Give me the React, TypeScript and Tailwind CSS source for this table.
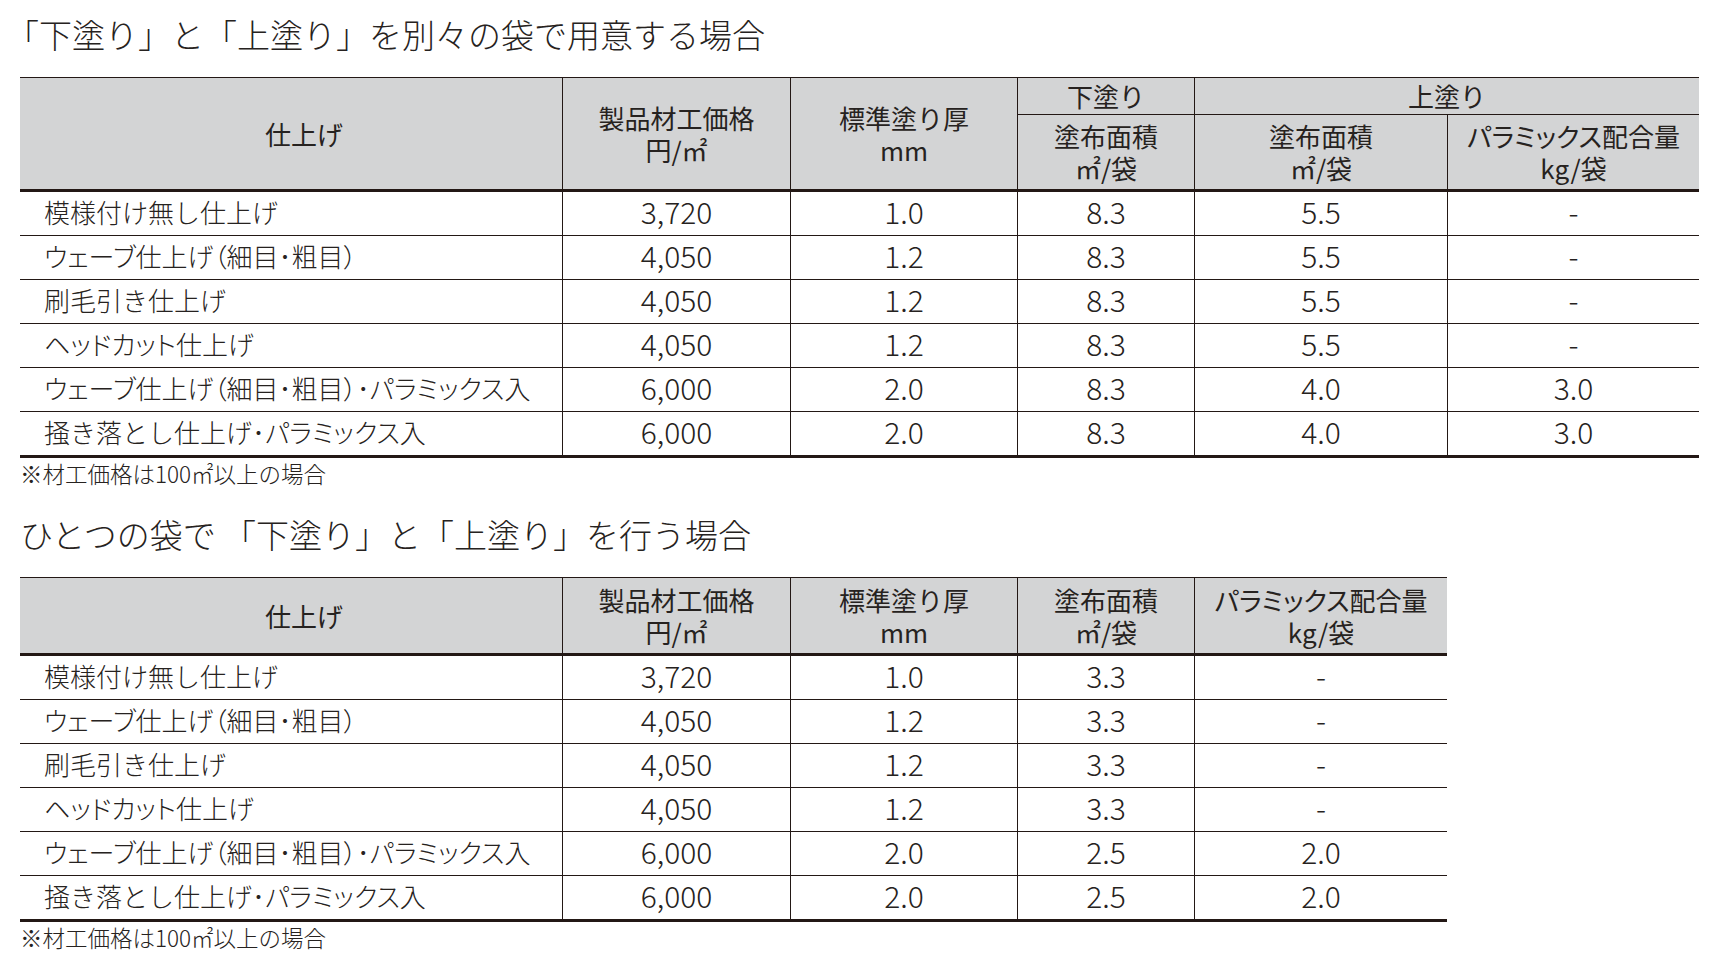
// Price tables for 下塗り / 上塗り products
import type { ReactNode } from "react";

const LINE = "border-[#231815]";

type Row = string[];

const separateRows: Row[] = [
  ["模様付け無し仕上げ", "3,720", "1.0", "8.3", "5.5", "-"],
  ["ウェーブ仕上げ（細目･粗目）", "4,050", "1.2", "8.3", "5.5", "-"],
  ["刷毛引き仕上げ", "4,050", "1.2", "8.3", "5.5", "-"],
  ["ヘッドカット仕上げ", "4,050", "1.2", "8.3", "5.5", "-"],
  ["ウェーブ仕上げ（細目･粗目）･パラミックス入", "6,000", "2.0", "8.3", "4.0", "3.0"],
  ["掻き落とし仕上げ･パラミックス入", "6,000", "2.0", "8.3", "4.0", "3.0"],
];

const singleRows: Row[] = [
  ["模様付け無し仕上げ", "3,720", "1.0", "3.3", "-"],
  ["ウェーブ仕上げ（細目･粗目）", "4,050", "1.2", "3.3", "-"],
  ["刷毛引き仕上げ", "4,050", "1.2", "3.3", "-"],
  ["ヘッドカット仕上げ", "4,050", "1.2", "3.3", "-"],
  ["ウェーブ仕上げ（細目･粗目）･パラミックス入", "6,000", "2.0", "2.5", "2.0"],
  ["掻き落とし仕上げ･パラミックス入", "6,000", "2.0", "2.5", "2.0"],
];

// katakana runs and brackets are set proportionally, like the printed table
function Kana({ text }: { text: string }) {
  const parts = text.split(/([\u30A0-\u30FF（）]+)/);
  return (
    <>
      {parts.map((p, i) =>
        /^[\u30A0-\u30FF（）]+$/.test(p) ? (
          <span key={i} className="[font-feature-settings:'palt']">{p}</span>
        ) : (
          p
        )
      )}
    </>
  );
}

const th = `bg-[#d3d4d5] font-normal text-[26px] leading-[32px] text-center align-middle p-0 ${LINE}`;

function Head({ top, bottom }: { top: string; bottom?: ReactNode }) {
  return (
    <>
      <Kana text={top} />
      {bottom && (
        <>
          <br />
          {bottom}
        </>
      )}
    </>
  );
}

function Body({ rows }: { rows: Row[] }) {
  return (
    <tbody>
      {rows.map((r, i) => {
        const last = i === rows.length - 1;
        const bb = last ? "border-b-[3px]" : "border-b";
        return (
          <tr key={i} className={last ? "h-[46px]" : "h-[44px]"}>
            {r.map((c, j) =>
              j === 0 ? (
                <td key={j} className={`${bb} ${LINE} pl-[24px] pb-[3px] text-[26px] leading-none text-left whitespace-nowrap`}>
                  <Kana text={c} />
                </td>
              ) : (
                <td key={j} className={`${bb} border-l ${LINE} pb-[5px] text-[30px] leading-none text-center`}>
                  {c}
                </td>
              )
            )}
          </tr>
        );
      })}
    </tbody>
  );
}

function Note() {
  return <p className="text-[22.5px] leading-[30px]">※材工価格は100㎡以上の場合</p>;
}

export default function App() {
  return (
    <div className="min-h-screen bg-white pl-[20px] pt-[10px] text-[#262220] font-light font-['Noto_Sans_CJK_JP','Noto_Sans',sans-serif]">
      <h2 className="-ml-[14px] text-[33px] leading-[48px] font-light whitespace-nowrap">
        「下塗り」と「上塗り」を別々の袋で用意する場合
      </h2>

      <table className="mt-[19px] table-fixed border-separate border-spacing-0 w-[1679px]">
        <colgroup>
          <col className="w-[542px]" />
          <col className="w-[228px]" />
          <col className="w-[227px]" />
          <col className="w-[177px]" />
          <col className="w-[253px]" />
          <col className="w-[252px]" />
        </colgroup>
        <thead>
          <tr className="h-[38px]">
            <th rowSpan={2} className={`${th} pl-[26px] border-t-[1.5px] border-b-[3px]`}>仕上げ</th>
            <th rowSpan={2} className={`${th} border-t-[1.5px] border-b-[3px] border-l`}>
              <Head top="製品材工価格" bottom="円/㎡" />
            </th>
            <th rowSpan={2} className={`${th} border-t-[1.5px] border-b-[3px] border-l`}>
              <Head top="標準塗り厚" bottom="mm" />
            </th>
            <th className={`${th} border-t-[1.5px] border-b border-l`}>下塗り</th>
            <th colSpan={2} className={`${th} border-t-[1.5px] border-b border-l`}>上塗り</th>
          </tr>
          <tr className="h-[77px]">
            <th className={`${th} border-b-[3px] border-l`}>
              <Head top="塗布面積" bottom="㎡/袋" />
            </th>
            <th className={`${th} border-b-[3px] border-l`}>
              <Head top="塗布面積" bottom="㎡/袋" />
            </th>
            <th className={`${th} border-b-[3px] border-l`}>
              <Head top="パラミックス配合量" bottom="kg/袋" />
            </th>
          </tr>
        </thead>
        <Body rows={separateRows} />
      </table>
      <Note />

      <h2 className="mt-[22px] text-[33px] leading-[48px] font-light whitespace-nowrap">
        ひとつの袋で 「下塗り」と「上塗り」を行う場合
      </h2>

      <table className="mt-[19px] table-fixed border-separate border-spacing-0 w-[1427px]">
        <colgroup>
          <col className="w-[542px]" />
          <col className="w-[228px]" />
          <col className="w-[227px]" />
          <col className="w-[177px]" />
          <col className="w-[253px]" />
        </colgroup>
        <thead>
          <tr className="h-[79px]">
            <th className={`${th} pl-[26px] border-t-[1.5px] border-b-[3px]`}>仕上げ</th>
            <th className={`${th} border-t-[1.5px] border-b-[3px] border-l`}>
              <Head top="製品材工価格" bottom="円/㎡" />
            </th>
            <th className={`${th} border-t-[1.5px] border-b-[3px] border-l`}>
              <Head top="標準塗り厚" bottom="mm" />
            </th>
            <th className={`${th} border-t-[1.5px] border-b-[3px] border-l`}>
              <Head top="塗布面積" bottom="㎡/袋" />
            </th>
            <th className={`${th} border-t-[1.5px] border-b-[3px] border-l`}>
              <Head top="パラミックス配合量" bottom="kg/袋" />
            </th>
          </tr>
        </thead>
        <Body rows={singleRows} />
      </table>
      <Note />
    </div>
  );
}
